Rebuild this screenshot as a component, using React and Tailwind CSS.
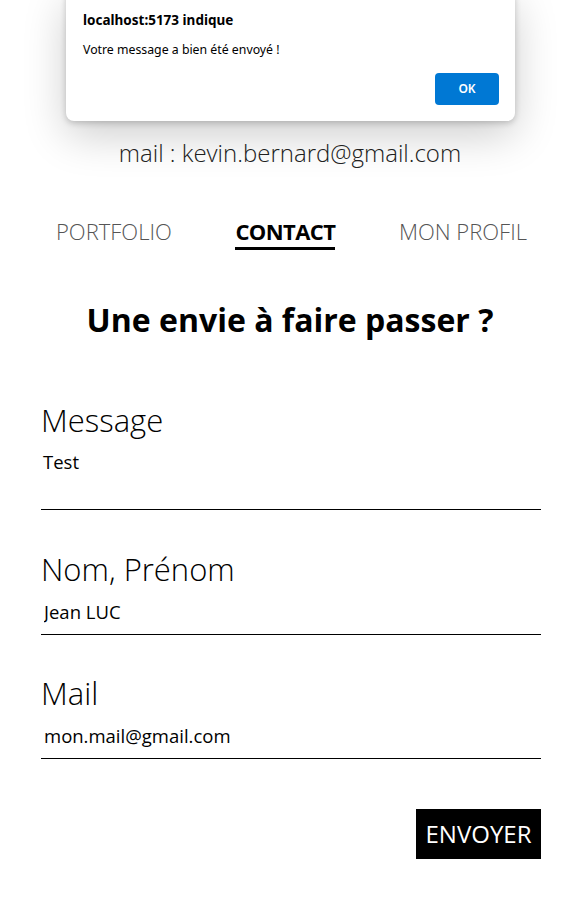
import React, { useState } from 'react';

const Field = ({ label, value, multiline, className = '' }) => (
    <div className={className}>
        <label className="block text-[31px] font-light leading-[38px] text-black">{label}</label>
        {multiline ? (
            <textarea
                defaultValue={value}
                className="mt-[11px] block h-[60px] w-full resize-none border-b border-black pl-[2px] text-[18.5px] leading-[24px] text-black outline-none"
            />
        ) : (
            <input
                defaultValue={value}
                className="mt-[11px] block h-[36px] w-full border-b border-black pb-[11px] pl-[3px] text-[18.5px] leading-[24px] text-black outline-none"
            />
        )}
    </div>
);

const AlertBox = ({ onClose }) => (
    <div className="absolute left-[66px] top-[-10px] z-50 h-[131px] w-[449px] rounded-lg bg-white shadow-[0_2px_6px_rgba(0,0,0,0.2),0_14px_44px_rgba(0,0,0,0.2)] font-['Noto_Sans',sans-serif]">
        <div className="px-[17px] pt-[21px]">
            <p className="text-[13.5px] font-bold leading-[18px] text-black">localhost:5173 indique</p>
            <p className="mt-[12px] text-[12.3px] leading-[18px] text-black">Votre message a bien été envoyé !</p>
        </div>
        <button
            onClick={onClose}
            className="absolute bottom-[16px] right-[16px] h-[32px] w-[64px] rounded bg-[#0078d4] text-[12px] font-semibold text-white"
        >
            OK
        </button>
    </div>
);

export default function App() {
    const [showAlert, setShowAlert] = useState(true);

    return (
        <div className="relative min-h-[918px] bg-white font-['Open_Sans',sans-serif] text-black">
            {showAlert && <AlertBox onClose={() => setShowAlert(false)} />}

            <p className="pt-[138px] text-center text-[24px] font-light leading-[30px] text-[#222]">mail : kevin.bernard@gmail.com</p>

            <nav className="mt-[48px] flex items-start justify-between pl-[56px] pr-[53px] text-[22px] leading-[30px]">
                <a className="font-light text-[#555]">PORTFOLIO</a>
                <a className="border-b-[3px] border-black pb-[1px] font-bold tracking-[-0.6px]">CONTACT</a>
                <a className="font-light text-[#555]">MON PROFIL</a>
            </nav>

            <h1 className="mt-[50px] text-center text-[32px] font-bold leading-[40px]">Une envie à faire passer ?</h1>

            <form className="mt-[61px] pl-[41px] pr-[39px]" onSubmit={e => e.preventDefault()}>
                <Field label="Message" value="Test" multiline />
                <Field className="mt-[40px]" label="Nom, Prénom" value="Jean LUC" />
                <Field className="mt-[39px]" label="Mail" value="mon.mail@gmail.com" />
                <div className="mt-[50px] flex justify-end">
                    <button type="submit" className="h-[50px] w-[125px] bg-black text-[24px] text-white">ENVOYER</button>
                </div>
            </form>
        </div>
    );
}
